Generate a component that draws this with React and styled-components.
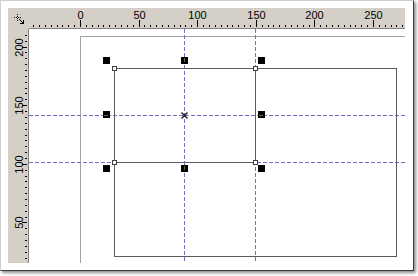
import React from 'react';
import styled, { createGlobalStyle } from 'styled-components';

const Global = createGlobalStyle`
  html, body { margin: 0; padding: 0; background: #fff; }
  body {
    width: 418px; height: 276px; overflow: hidden;
    font-family: "Liberation Sans", Arial, sans-serif;
  }
`;

const Frame = styled.div`
  box-sizing: border-box;
  width: 414px;
  height: 271px;
  padding: 7px 8px 7px 7px;
  border: 1px solid;
  border-color: #cfcfcf #3a3a3a #3a3a3a #cfcfcf;
  box-shadow: 2px 2px 3px rgba(0, 0, 0, 0.45);
  background: #fff;
`;

const Editor = styled.div`
  display: grid;
  grid-template-columns: 21px 376px;
  grid-template-rows: 21px 234px;
  background: #d4d0c8;
`;

const Corner = styled.div`
  background: #d4d0c8;
  padding: 5px 0 0 5px;
  svg { display: block; }
`;

const TopRuler = styled.div`
  box-sizing: border-box;
  border-bottom: 1px solid #808080;
  background: #d4d0c8;
  svg { display: block; }
`;

const LeftRuler = styled.div`
  box-sizing: border-box;
  border-right: 1px solid #808080;
  background: #d4d0c8;
  svg { display: block; }
`;

const Canvas = styled.div`
  position: relative;
  background: #fff;
  overflow: hidden;
`;

const PageLine = styled.div`
  position: absolute;
  background: #a3a3a3;
  left: 51px;
  top: 7px;
  ${(p) => (p.$vertical ? 'width: 1px; bottom: 0;' : 'height: 1px; right: 0;')}
`;

const Shape = styled.div`
  position: absolute;
  box-sizing: border-box;
  left: ${(p) => p.$x}px;
  top: ${(p) => p.$y}px;
  width: ${(p) => p.$w}px;
  height: ${(p) => p.$h}px;
  border: 1px solid #5c5c5c;
  z-index: 3;
`;

const Edge = styled.div`
  position: absolute;
  background: #5c5c5c;
  left: ${(p) => p.$x}px;
  top: ${(p) => p.$y}px;
  width: ${(p) => p.$w}px;
  height: ${(p) => p.$h}px;
  z-index: 3;
`;

const GUIDE = '#7272c4';

const Guide = styled.div`
  position: absolute;
  z-index: 2;
  ${(p) =>
    p.$vertical
      ? `left: ${p.$at}px; top: 0; bottom: 0; width: 1px;
         background: repeating-linear-gradient(to bottom, ${GUIDE} 0 4px, transparent 4px 6px);`
      : `top: ${p.$at}px; left: 0; right: 0; height: 1px;
         background: repeating-linear-gradient(to right, ${GUIDE} 0 4px, transparent 4px 6px);`}
`;

const Handle = styled.div`
  position: absolute;
  left: ${(p) => p.$x}px;
  top: ${(p) => p.$y}px;
  width: 7px;
  height: 7px;
  background: #000;
  z-index: 4;
  &::after {
    content: '';
    position: absolute;
    display: ${(p) => (p.$mark ? 'block' : 'none')};
    background: #6a6a36;
    ${(p) =>
      p.$mark === 'v'
        ? 'left: 3px; top: 1px; width: 1px; height: 4px;'
        : 'top: 4px; left: 1px; height: 1px; width: 4px;'}
  }
`;

const Marker = styled.div`
  position: absolute;
  box-sizing: border-box;
  left: ${(p) => p.$x - 2}px;
  top: ${(p) => p.$y - 2}px;
  width: 5px;
  height: 5px;
  background: #fff;
  border: 1px solid #404040;
  z-index: 5;
`;

const CenterMark = styled.svg`
  position: absolute;
  left: 152px;
  top: 83px;
  z-index: 6;
`;

const SCALE = 1.172;

function TopScale() {
  const ticks = [];
  for (let v = -40; v <= 275; v += 5) {
    const x = Math.round(51 + SCALE * v);
    const major = v % 50 === 0;
    ticks.push(
      <rect key={'t' + v} x={x} y={major ? 12 : 17} width={1} height={major ? 7 : 2} fill="#000" />
    );
    if (major) {
      ticks.push(
        <text key={'l' + v} x={x + 0.5} y={11} textAnchor="middle" fontSize="11" fill="#000"
          fontFamily='"Liberation Sans", Arial, sans-serif'>
          {v}
        </text>
      );
    }
  }
  return (
    <svg width="376" height="20" shapeRendering="crispEdges">
      {ticks}
    </svg>
  );
}

function LeftScale() {
  const ticks = [];
  for (let v = 20; v <= 210; v += 5) {
    const y = Math.round(252 - SCALE * v);
    const major = v % 50 === 0;
    ticks.push(
      <rect key={'t' + v} x={major ? 14 : 17} y={y} width={major ? 5 : 2} height={1} fill="#000" />
    );
    if (major) {
      ticks.push(
        <text key={'l' + v} transform={`translate(14.5 ${y + 0.5}) rotate(-90)`} textAnchor="middle"
          fontSize="11" fill="#000" fontFamily='"Liberation Sans", Arial, sans-serif'>
          {v}
        </text>
      );
    }
  }
  return (
    <svg width="20" height="234" shapeRendering="crispEdges">
      {ticks}
    </svg>
  );
}

function CornerIcon() {
  const dots = [
    [3, 0], [3, 2], [0, 3], [2, 3], [4, 3], [6, 3], [3, 4], [3, 6],
  ];
  return (
    <svg width="13" height="13" viewBox="0 0 13 13" shapeRendering="crispEdges">
      {dots.map(([x, y], i) => (
        <rect key={i} x={x + 1} y={y + 1} width="1" height="1" fill="#000" />
      ))}
      <rect x="6" y="6" width="1" height="1" fill="#000" />
      <rect x="7" y="7" width="1" height="1" fill="#000" />
      <rect x="8" y="8" width="1" height="1" fill="#000" />
      <rect x="9" y="9" width="1" height="1" fill="#000" />
      <rect x="10" y="7" width="1" height="4" fill="#000" />
      <rect x="7" y="10" width="4" height="1" fill="#000" />
    </svg>
  );
}

const handles = [
  [74, 28, null], [152, 28, 'v'], [229, 28, null],
  [74, 82, 'h'], [229, 82, 'h'],
  [74, 136, null], [152, 136, 'v'], [229, 136, null],
];

const markers = [
  [85, 39], [226, 39], [85, 133], [226, 133],
];

export default function App() {
  return (
    <>
      <Global />
      <Frame>
        <Editor>
          <Corner>
            <CornerIcon />
          </Corner>
          <TopRuler>
            <TopScale />
          </TopRuler>
          <LeftRuler>
            <LeftScale />
          </LeftRuler>
          <Canvas>
            <PageLine $vertical />
            <PageLine />
            <Guide $vertical $at={155} />
            <Guide $vertical $at={226} />
            <Guide $at={86} />
            <Guide $at={133} />
            <Shape $x={85} $y={39} $w={283} $h={189} />
            <Edge $x={226} $y={39} $w={1} $h={95} />
            <Edge $x={85} $y={133} $w={142} $h={1} />
            {handles.map(([x, y, m], i) => (
              <Handle key={i} $x={x} $y={y} $mark={m} />
            ))}
            {markers.map(([x, y], i) => (
              <Marker key={i} $x={x} $y={y} />
            ))}
            <CenterMark width="7" height="7" viewBox="0 0 7 7">
              <path d="M0.5 0.5 L6.5 6.5 M6.5 0.5 L0.5 6.5" stroke="#1a1a1a" strokeWidth="1.4" />
            </CenterMark>
          </Canvas>
        </Editor>
      </Frame>
    </>
  );
}
